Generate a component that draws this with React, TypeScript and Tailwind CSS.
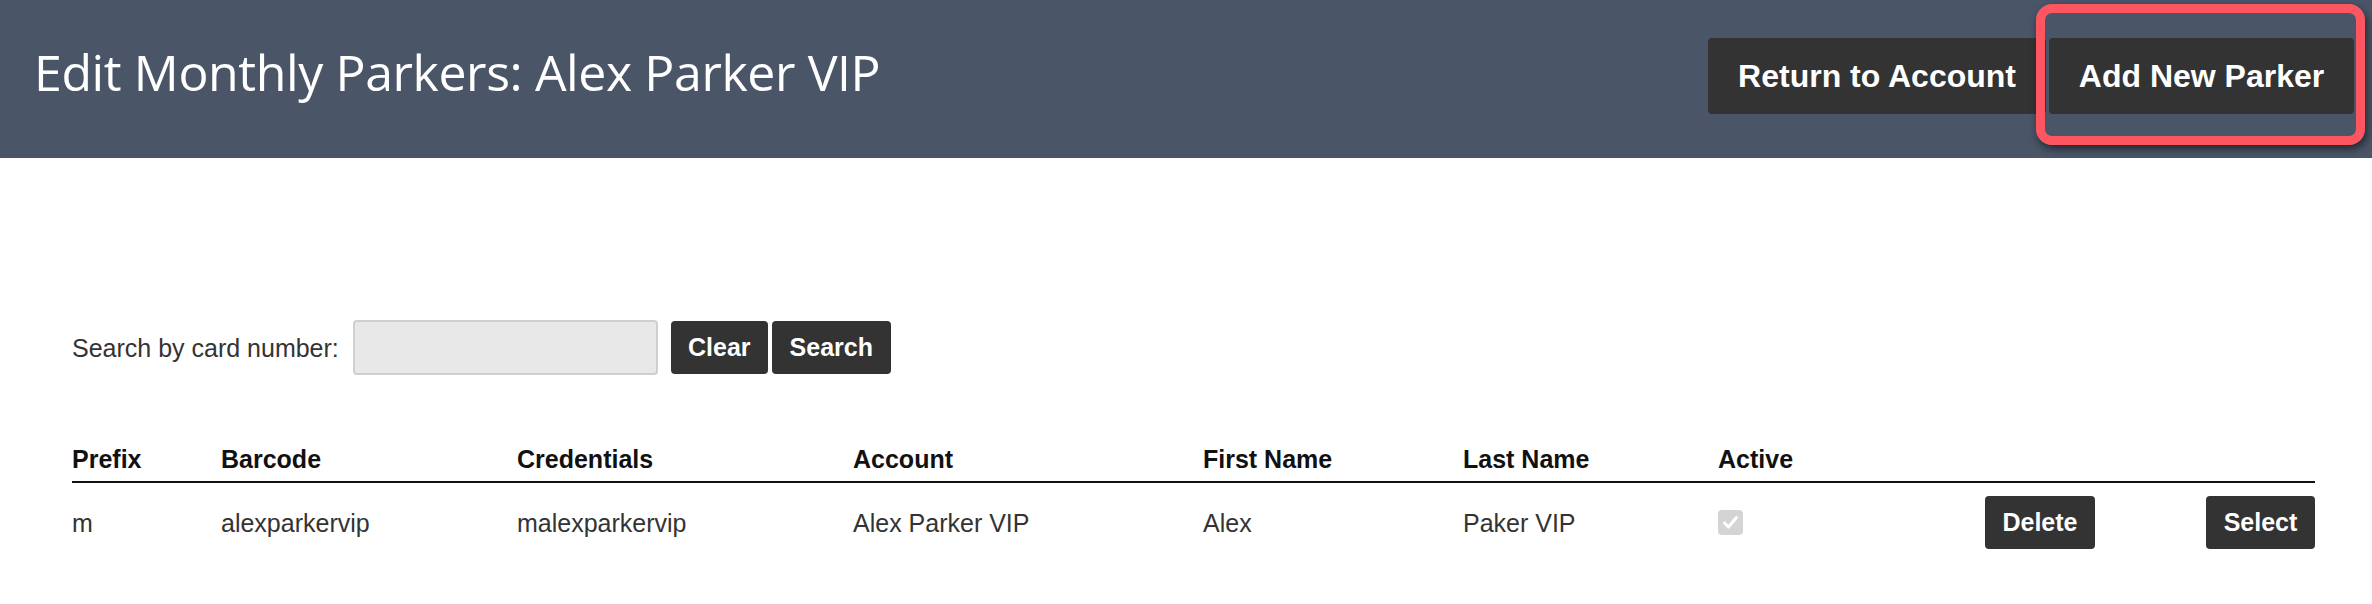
import React from "react";

const cols = "grid grid-cols-[149px_296px_336px_350px_260px_255px_157px_220px_220px]";

function DarkBtn({ children, w }: { children: React.ReactNode; w: string }) {
  return (
    <button
      className={`${w} h-[53px] rounded-[4px] bg-[#333333] text-white font-bold text-[25px] leading-none flex items-center justify-center`}
    >
      {children}
    </button>
  );
}

export default function App() {
  return (
    <div className="w-[2372px] min-h-[604px] bg-white font-['Liberation_Sans',Arial,sans-serif]">
      <header className="h-[158px] bg-[#4a5568] flex justify-between items-start pl-[34px] pr-[18px]">
        <h1 className="mt-[47px] text-white text-[50px] leading-[50px] tracking-[-0.4px] font-['Open_Sans',sans-serif] font-normal">
          Edit Monthly Parkers: Alex Parker VIP
        </h1>
        <div className="mt-[38px] flex gap-[3px]">
          <button className="h-[76px] px-[30px] rounded-[4px] bg-[#333333] text-white font-bold text-[32px] leading-none">
            Return to Account
          </button>
          <div className="relative">
            <button className="h-[76px] w-[305px] rounded-[4px] bg-[#333333] text-white font-bold text-[32px] leading-none">
              Add New Parker
            </button>
            <div className="absolute -left-[13px] -right-[11px] -top-[34px] -bottom-[31px] rounded-[16px] border-[9px] border-[#fd5661] shadow-[2px_4px_8px_rgba(0,0,0,0.55)] pointer-events-none" />
          </div>
        </div>
      </header>

      <main className="pl-[72px]">
        <div className="mt-[162px] flex items-center h-[55px]">
          <span className="text-[25px] text-[#333333] leading-[28px]">Search by card number:</span>
          <input
            className="ml-[14px] w-[305px] h-[55px] rounded-[4px] bg-[#e8e8e8] border-2 border-[#cfcfcf] outline-none"
            type="text"
          />
          <div className="ml-[13px] flex gap-[4px]">
            <DarkBtn w="w-[97px]">Clear</DarkBtn>
            <DarkBtn w="w-[119px]">Search</DarkBtn>
          </div>
        </div>

        <div className="mt-[70px] w-[2243px]">
          <div className={`${cols} pb-[8px] border-b-[2px] border-[#111111] text-[25px] leading-[28px] font-bold text-[#111111]`}>
            <div>Prefix</div>
            <div>Barcode</div>
            <div>Credentials</div>
            <div>Account</div>
            <div>First Name</div>
            <div>Last Name</div>
            <div>Active</div>
            <div />
            <div />
          </div>
          <div className={`${cols} items-center py-[13px] text-[25px] leading-[28px] text-[#333333]`}>
            <div>m</div>
            <div>alexparkervip</div>
            <div>malexparkervip</div>
            <div>Alex Parker VIP</div>
            <div>Alex</div>
            <div>Paker VIP</div>
            <div>
              <div className="w-[25px] h-[25px] rounded-[4px] bg-[#d4d4d4] flex items-center justify-center">
                <svg width="17" height="15" viewBox="0 0 17 15" fill="none">
                  <path d="M2.5 8 L6.5 12 L14.5 2.5" stroke="white" strokeWidth="3" strokeLinecap="round" strokeLinejoin="round" />
                </svg>
              </div>
            </div>
            <div className="flex justify-end">
              <DarkBtn w="w-[110px]">Delete</DarkBtn>
            </div>
            <div className="flex justify-end">
              <DarkBtn w="w-[109px]">Select</DarkBtn>
            </div>
          </div>
        </div>
      </main>
    </div>
  );
}
